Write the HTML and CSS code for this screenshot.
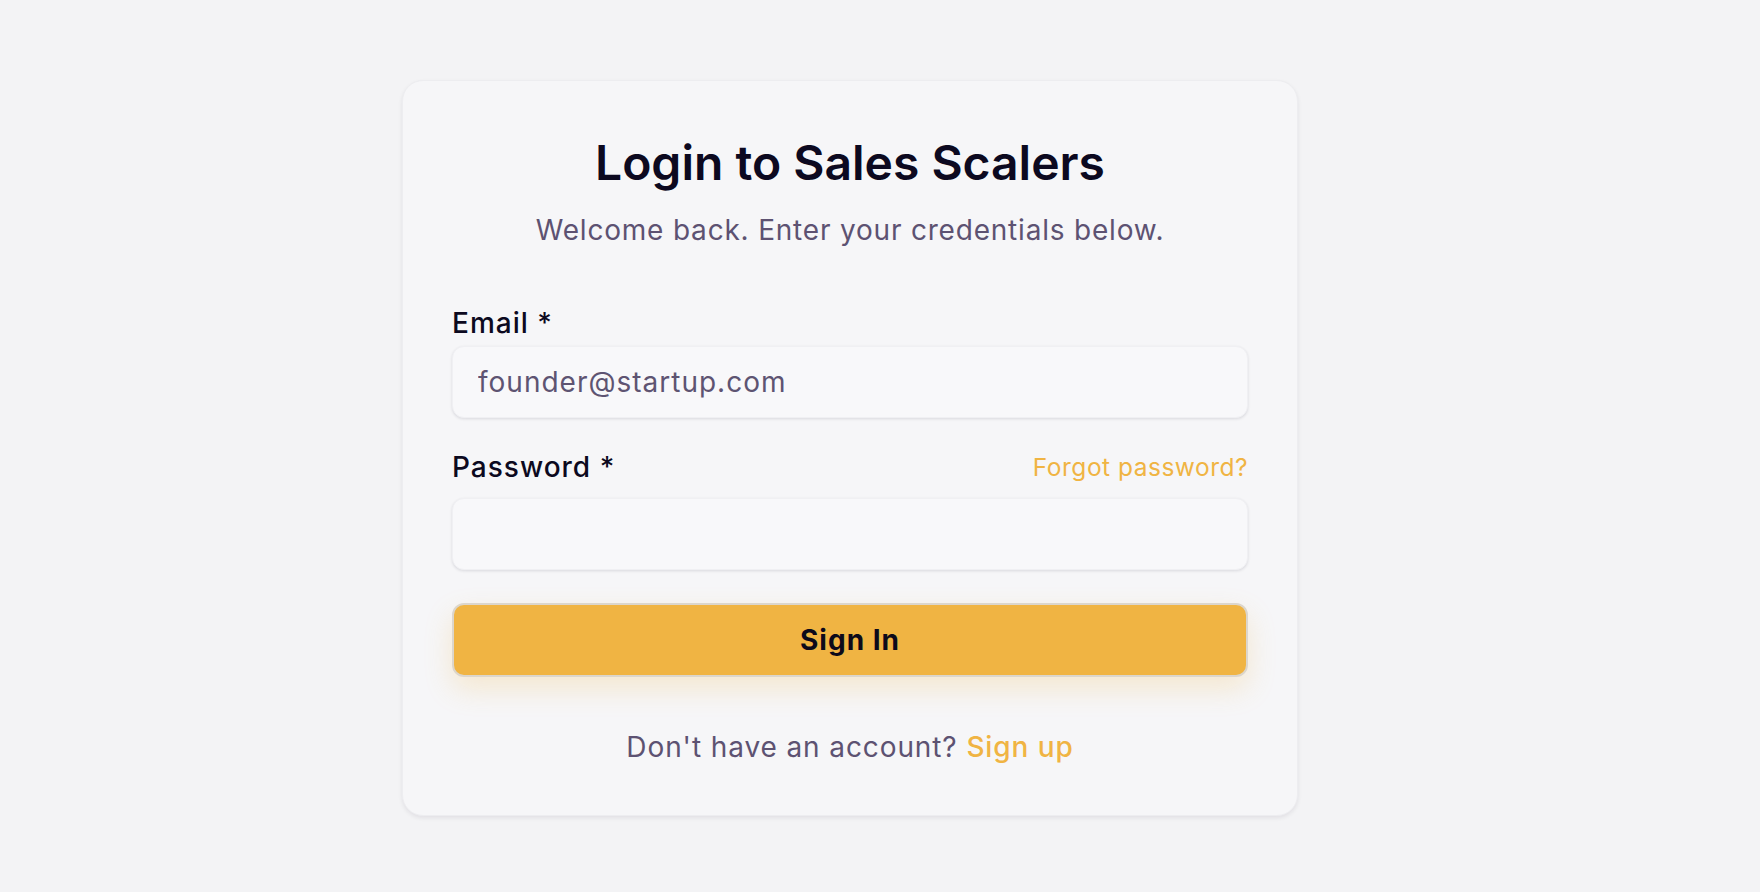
FILE: index.html
```html
<!DOCTYPE html>
<html lang="en">
<head>
<meta charset="utf-8">
<title>Login to Sales Scalers</title>
<link rel="stylesheet" href="styles.css">
</head>
<body>
<main class="page">
  <section class="card">
    <header class="card-head">
      <h1 class="title">Login to Sales Scalers</h1>
      <p class="subtitle">Welcome back. Enter your credentials below.</p>
    </header>
    <form class="form">
      <div class="field field-email">
        <div class="label-row">
          <label class="label" for="email">Email *</label>
        </div>
        <input class="input" id="email" type="email" placeholder="founder@startup.com">
      </div>
      <div class="field field-password">
        <div class="label-row">
          <label class="label" for="password">Password *</label>
          <a class="forgot" href="#">Forgot password?</a>
        </div>
        <input class="input" id="password" type="password">
      </div>
      <button class="btn" type="button">Sign In</button>
    </form>
    <p class="footer">Don't have an account? <a class="link" href="#">Sign up</a></p>
  </section>
</main>
</body>
</html>
```

FILE: styles.css
```css
* { box-sizing: border-box; }
html, body { margin: 0; padding: 0; }
body {
  background: #f3f3f5;
  font-family: Inter, "Open Sans", "DejaVu Sans", sans-serif;
  color: #0d0a1f;
  height: 892px;
}
.page {
  display: flex;
  justify-content: center;
  padding: 80px 60px 0 0;
}
.card {
  width: 896px;
  background: #f6f6f8;
  border: 1px solid #ededf0;
  border-radius: 21px;
  box-shadow: 0 2px 4px rgba(20, 15, 40, 0.08);
  padding: 52px 49px 50px;
}
.card-head {
  text-align: center;
  margin-bottom: 57px;
}
.title {
  margin: 0;
  font-size: 48px;
  line-height: 60px;
  font-weight: 600;
  color: #0c0920;
  letter-spacing: 0;
}
.subtitle {
  margin: 19px 0 0;
  font-size: 28px;
  line-height: 36px;
  color: #5d5272;
  letter-spacing: 0.8px;
}
.form {
  display: flex;
  flex-direction: column;
}
.field {
  display: flex;
  flex-direction: column;
}
.field-email { margin-bottom: 31px; }
.field-password { margin-bottom: 33px; }
.label-row {
  display: flex;
  justify-content: space-between;
  align-items: center;
}
.field-email .label-row { margin-bottom: 5px; }
.field-password .label-row { margin-bottom: 13px; }
.label {
  font-size: 28px;
  line-height: 36px;
  font-weight: 500;
  color: #0c0920;
  letter-spacing: 1px;
}
.forgot {
  font-size: 24.5px;
  line-height: 36px;
  color: #f0b443;
  text-decoration: none;
  letter-spacing: 0.5px;
}
.input {
  height: 72px;
  width: 100%;
  border: 1px solid #f0f0f3;
  border-radius: 12px;
  background: #f8f8fa;
  box-shadow: 0 1px 3px rgba(20, 15, 40, 0.12);
  padding: 0 25px;
  font-family: inherit;
  font-size: 28px;
  color: #0c0920;
  letter-spacing: 1px;
  outline: none;
}
.input::placeholder { color: #5e5472; }
.btn {
  height: 74px;
  width: 100%;
  border: 2px solid #dcd6cc;
  border-radius: 12px;
  background: #f0b443;
  box-shadow: 0 12px 28px rgba(240, 180, 67, 0.22);
  font-family: inherit;
  font-size: 28px;
  font-weight: 700;
  color: #0d0a1a;
  letter-spacing: 1px;
  cursor: pointer;
}
.footer {
  margin: 52px 0 0;
  text-align: center;
  font-size: 28px;
  line-height: 36px;
  color: #5d5272;
  letter-spacing: 0.9px;
}
.link {
  color: #f0b443;
  text-decoration: none;
  font-weight: 500;
}
```
